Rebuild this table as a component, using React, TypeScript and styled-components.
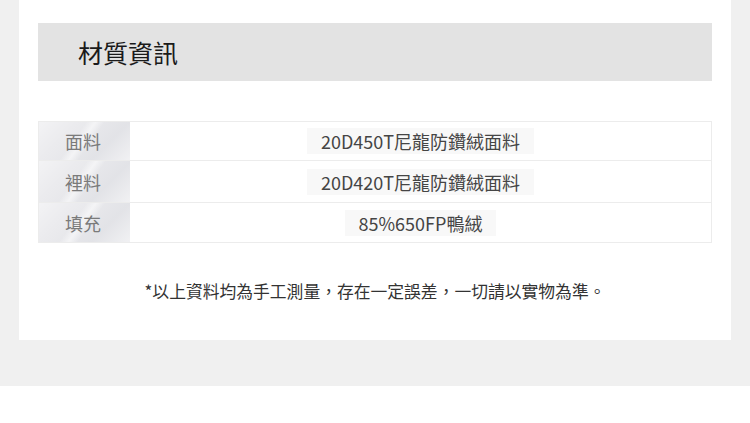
import React from "react";
import styled, { createGlobalStyle } from "styled-components";

const Global = createGlobalStyle`
  html, body { margin: 0; padding: 0; background: #ffffff; }
  body { font-family: "Noto Sans CJK TC", "Noto Sans", sans-serif; }
`;

const Page = styled.div`
  width: 750px;
  height: 386px;
  background: #f0f0f0;
  padding: 0 19px;
  box-sizing: border-box;
`;

const Card = styled.section`
  height: 340px;
  background: #ffffff;
  padding: 23px 19px 0;
  box-sizing: border-box;
  display: flex;
  flex-direction: column;
`;

const Header = styled.div`
  height: 58px;
  background: #e3e3e3;
  display: flex;
  align-items: center;
  padding-left: 40px;
`;

const Title = styled.h2`
  margin: 0;
  font-size: 25px;
  font-weight: 400;
  color: #1a1a1a;
  line-height: 1;
`;

const Table = styled.div`
  margin-top: 40px;
  border: 1px solid #ececec;
  display: flex;
  flex-direction: column;
`;

const Row = styled.div<{ $h: number }>`
  height: ${(p) => p.$h}px;
  display: grid;
  grid-template-columns: 91px 1fr;
  & + & {
    border-top: 1px solid #ececec;
  }
`;

const Label = styled.div`
  background:
    linear-gradient(125deg, transparent 40%, rgba(255,255,255,0.55) 48%, transparent 56%),
    linear-gradient(135deg, rgba(255,255,255,0.4) 0%, transparent 30%, rgba(210,212,218,0.35) 70%, rgba(255,255,255,0.3) 100%),
    #ebebee;
  display: flex;
  align-items: center;
  padding-left: 26px;
  font-size: 18px;
  color: #7a7a7a;
`;

const Value = styled.div`
  display: flex;
  align-items: center;
  justify-content: center;
`;

const Chip = styled.span`
  background: #f8f8f8;
  padding: 1px 14px;
  font-size: 18px;
  color: #454545;
  line-height: 24px;
`;

const Note = styled.p`
  margin: 36px 0 0;
  text-align: center;
  font-size: 16.8px;
  color: #333333;
  line-height: 24px;
`;

const rows = [
  { label: "面料", value: "20D450T尼龍防鑽絨面料", h: 38 },
  { label: "裡料", value: "20D420T尼龍防鑽絨面料", h: 41 },
  { label: "填充", value: "85%650FP鴨絨", h: 39 },
];

export default function App() {
  return (
    <>
      <Global />
      <Page>
        <Card>
          <Header>
            <Title>材質資訊</Title>
          </Header>
          <Table>
            {rows.map((r) => (
              <Row key={r.label} $h={r.h}>
                <Label>{r.label}</Label>
                <Value>
                  <Chip>{r.value}</Chip>
                </Value>
              </Row>
            ))}
          </Table>
          <Note>*以上資料均為手工測量，存在一定誤差，一切請以實物為準。</Note>
        </Card>
      </Page>
    </>
  );
}
